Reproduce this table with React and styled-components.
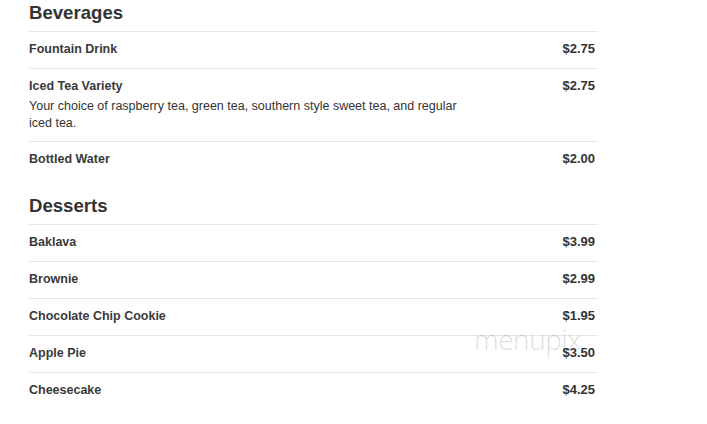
import styled, { createGlobalStyle } from "styled-components";

const GlobalStyle = createGlobalStyle`
  body {
    margin: 0;
    background: #ffffff;
    font-family: "Liberation Sans", Arial, sans-serif;
    color: #333333;
  }
`;

const Page = styled.main`
  position: relative;
  width: 569px;
  padding: 1px 0 0 29px;
`;

const Section = styled.section`
  margin-bottom: 16px;
`;

const Title = styled.h2`
  font-size: 18.6px;
  font-weight: 700;
  line-height: 24px;
  margin: 0 0 6px;
  color: #333333;
`;

const Row = styled.div`
  border-top: 1px solid #e6e6e6;
  padding: 6px 0 9px;
`;

const Line = styled.div`
  display: flex;
  justify-content: space-between;
  align-items: baseline;
  height: 21px;
  padding-right: 3px;
`;

const Name = styled.span`
  font-size: 12.5px;
  font-weight: 700;
  line-height: 21px;
  color: #3a3a3a;
`;

const Price = styled.span`
  font-size: 13px;
  font-weight: 700;
  line-height: 21px;
`;

const Desc = styled.p`
  font-size: 12.5px;
  line-height: 17px;
  height: 34px;
  margin: 2px 0 0;
  max-width: 440px;
`;

const Watermark = styled.span`
  position: absolute;
  left: 474px;
  top: 320px;
  font-family: "Open Sans", sans-serif;
  font-weight: 300;
  font-size: 28px;
  line-height: 38px;
  letter-spacing: -0.5px;
  color: rgba(0, 0, 0, 0.15);
  pointer-events: none;
`;

const menu = [
  {
    title: "Beverages",
    items: [
      { name: "Fountain Drink", price: "$2.75" },
      {
        name: "Iced Tea Variety",
        price: "$2.75",
        desc: "Your choice of raspberry tea, green tea, southern style sweet tea, and regular iced tea."
      },
      { name: "Bottled Water", price: "$2.00" }
    ]
  },
  {
    title: "Desserts",
    items: [
      { name: "Baklava", price: "$3.99" },
      { name: "Brownie", price: "$2.99" },
      { name: "Chocolate Chip Cookie", price: "$1.95" },
      { name: "Apple Pie", price: "$3.50" },
      { name: "Cheesecake", price: "$4.25" }
    ]
  }
];

const App = () => (
  <Page>
    <GlobalStyle />
    {menu.map(s => (
      <Section key={s.title}>
        <Title>{s.title}</Title>
        {s.items.map(i => (
          <Row key={i.name}>
            <Line>
              <Name>{i.name}</Name>
              <Price>{i.price}</Price>
            </Line>
            {i.desc && <Desc>{i.desc}</Desc>}
          </Row>
        ))}
      </Section>
    ))}
    <Watermark>menupix</Watermark>
  </Page>
);

export default App;
